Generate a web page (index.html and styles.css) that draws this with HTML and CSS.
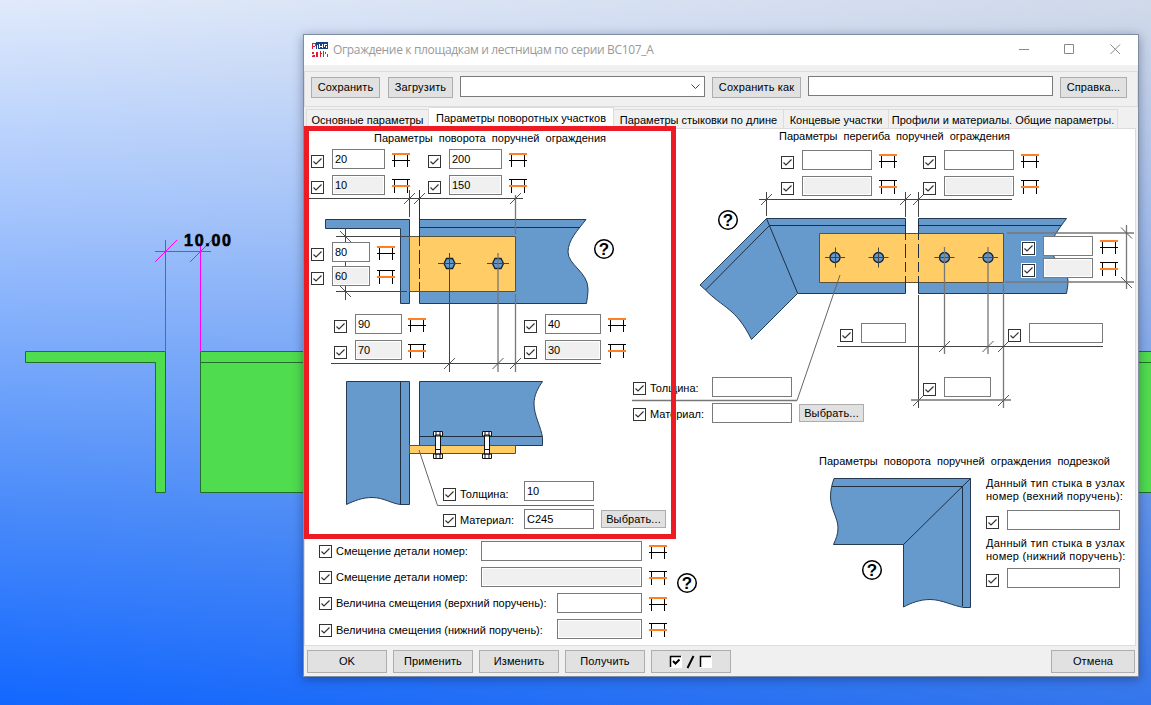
FILE: index.html
```html
<!DOCTYPE html>
<html lang="ru">
<head>
<meta charset="utf-8">
<title>Ограждение к площадкам и лестницам по серии ВС107_А</title>
<link rel="stylesheet" href="styles.css">
</head>
<body>
<svg class="defs" width="0" height="0">
  <symbol id="chk" viewBox="0 0 13 13"><rect x=".5" y=".5" width="12" height="12" fill="#fff" stroke="#333"/><path d="M2.5 6.5L5 9L10.5 3.5" fill="none" stroke="#333" stroke-width="1.2"/></symbol>
  <symbol id="top" viewBox="0 0 18 14"><path d="M2.5 2V14M15.5 2V14M0 7.5H18" stroke="#000" fill="none"/><path d="M0 0H18V2H0Z" fill="#ff7f27"/></symbol>
  <symbol id="mid" viewBox="0 0 18 14"><path d="M2.5 0V14M15.5 0V14M0 .5H18" stroke="#000" fill="none"/><path d="M0 6H18V8H0Z" fill="#ff7f27"/></symbol>
</svg>
<svg class="model" viewBox="0 0 1151 705">
  <g fill="#4fdc4f" stroke="#20702a">
    <path d="M25.5 351.5H165.5V492.5H155.5V362.5H25.5Z"/>
    <path d="M200.5 351.5H1160V492.5H200.5ZM200.5 362.5H1160"/>
  </g>
  <path d="M165.5 240V351M200.5 245V351M155 251.5H211M155 262L177 240M190 262L212 240" stroke="#f0f" fill="none" shape-rendering="crispEdges"/>
  <text class="dim" x="184" y="246" textLength="47">10.00</text>
</svg>

<main class="window">
  <header class="titlebar">
    <svg class="logo" viewBox="0 0 17 16"><path d="M4 0H16V7H4Z" fill="#173f8a"/><path d="M0 1H1V7H0ZM1 1H4V2H1ZM3 2H4V4H3ZM1 4H3V5H1ZM0 10H2V12H0ZM1 13H3V15H0V14ZM4 10H6V15H4ZM8 9H9V15H8ZM11 9H12V15H11ZM13 10H14V12H13ZM15 12H16V15H15ZM9 11H10V12H9Z" fill="#e11b32"/><path d="M5 3H6V7H5ZM7 2H8V6H7ZM8 4H10V5H8ZM10 2H11V6H10ZM12 2H15V3H13V5H12ZM14 4H15V6H14Z" fill="#fff"/></svg>
    <span class="caption">Ограждение к площадкам и лестницам по серии ВС107_А</span>
    <svg class="winbtns" viewBox="0 0 102 12"><path d="M0 5.500H10M45.500 .5H54.500V9.500H45.500ZM91.500 .5L101 10M101 .5L91.500 10" fill="none" stroke="#888"/></svg>
  </header>

  <section class="toolbar">
    <button class="btn b-save">Сохранить</button>
    <button class="btn b-load">Загрузить</button>
    <div class="combo"><svg viewBox="0 0 9 6"><path d="M.5 .5L4.500 4.500L8.500 .5" fill="none" stroke="#444"/></svg></div>
    <button class="btn b-saveas">Сохранить как</button>
    <input class="box name">
    <button class="btn b-help">Справка...</button>
  </section>

  <nav class="tabs">
    <span class="tab t1">Основные параметры</span><span class="tab t2 active">Параметры поворотных участков</span><span class="tab t3">Параметры стыковки по длине</span><span class="tab t4">Концевые участки</span><span class="tab t5">Профили и материалы. Общие параметры.</span>
  </nav>

  <section class="page">
    <svg class="drawing" viewBox="305 129 830 516">
      <g fill="#6699cc" stroke="#253b55">
        <path d="M325.500 219.500H409.500V303.500H400.500V228.500H325.500Z"/>
        <path d="M419.500 219.500H586C578 230 568 240 568 252C568 265 588 272 588 289C588 295 587 299 586.500 303.500H419.500Z"/>
        <path d="M346.500 381.500H409.500V504.500H401C392 504 384 497.500 372 497.500C362 497.500 354 501 346.500 504.500Z"/>
        <path d="M419.500 381.500H542.500C538 388 534 395 534 404C534 415 541 427 542.500 437.500V445.500H419.500Z"/>
        <path d="M766.500 218.500H905.500V293.500H797.500L751.500 339.500C736 308 723 308 705.500 290L700 285Z"/>
        <path d="M918.500 218.500H1066.500C1058 230 1050 240 1051 249C1053 262 1068 268 1068 281C1068 286 1067 290 1066.500 293.500H918.500Z"/>
        <path d="M834 478.500H970.500V607.500H964C953 606 942 599.500 930 599.500C920 599.500 911 603 903.500 607V544.500H833.500C836 539 838 534 838 528C838 518 830.500 509 830.500 497C830.500 490 832 484 834 478.500Z"/>
      </g>
      <path d="M419.500 227.500H580M400.500 381.500V504M419.500 436.500H542.500M766.500 218.500L797.500 293M905.500 225.500H769.500L705.500 290M918.500 225.500H1061M832 486.500H962.500V606M970.500 478.500L903.500 544.500" class="edge"/>
      <g fill="#ffcc66" stroke="#5c5138">
        <path d="M409.500 236.500H515.500V291.500H409.500ZM409.500 445.500H515.500V453.500H409.500ZM819.500 233.500H1003.500V282.500H819.500Z"/>
      </g>
      <path d="M419.500 190V246M419.500 250V264M419.500 268V279M419.500 282V291M905.500 220V240M905.500 244V258M905.500 262V272M905.500 276V293M918.500 220V240M918.500 244V258M918.500 262V272M918.500 276V293" class="edge"/>
      <g fill="#6699cc" stroke="#14202e" stroke-width="1.300">
        <path d="M444 263.500L446.500 258.500H452.500L455 263.500L452.500 268.500H446.500ZM492.500 263.500L495 258.500H501L503.500 263.500L501 268.500H495Z"/>
        <circle cx="835" cy="257.500" r="5"/><circle cx="878.500" cy="257.500" r="5"/><circle cx="944.500" cy="257.500" r="5"/><circle cx="988" cy="257.500" r="5"/>
      </g>
      <path class="dimline" d="M309 198.500H523M409.500 190V217M336 236.500H409M336 291.500H407M345.500 228V300M438 263.500H461M487 263.500H509M449.500 253V372M331 363.500H601
        M759 199.500H1012M766.500 192V216M905.500 192V217M918.500 192V217M825 257.500H845M868.500 257.500H888.500M934.500 257.500H954.500M978 257.500H998M835.500 247.500V267.500M878.500 247.500V267.500M837 346.500H1103M918.500 295V408"/>
      <path class="greyline" d="M515.500 195V234M515.500 294V372M498 253V372M1007 233H1134M1005 282H1134M1126.500 225V289M944.500 247V354M988 247V354M1003.500 284V408M911 400H1011M797 400.500H632"/>
      <path class="leader" d="M419 450L437.500 505.500H594M840 275L797 400.500"/>
      <path class="tick" d="M404 204L415 193M414 204L425 193M510 204L521 193M444 369L455 358M492.500 369L503.500 358M510 369L521 358M340 231L351 242M340 286L351 297
        M761 205L772 194M900 205L911 194M913 205L924 194M939 352L950 341M982.500 352L993.500 341M998 352L1009 341M913 406L924 395M998 406L1009 395M1121 227.500L1132 238.500M1121 277L1132 288"/>
      <g fill="#fff" stroke="#111">
        <path d="M435.500 435H440.500V454H435.500ZM433.500 431.500H442.500V436H433.500ZM433.500 454H442.500V458.500H433.500ZM436 431.500V436M440 431.500V436M436 454V458M440 454V458M435.500 449.500H440.500"/>
        <path d="M484.500 435H489.500V454H484.500ZM482.500 431.500H491.500V436H482.500ZM482.500 454H491.500V458.500H482.500ZM485 431.500V436M489 431.500V436M485 454V458M489 454V458M484.500 449.500H489.500"/>
      </g>
      <g class="help"><circle cx="604" cy="249" r="9.300"/><circle cx="687" cy="583" r="9.300"/><circle cx="728" cy="220" r="9.300"/><circle cx="872" cy="570" r="9.300"/>
        <text x="604" y="255">?</text><text x="687" y="589">?</text><text x="728" y="226">?</text><text x="872" y="576">?</text></g>
      <g class="heading"><text x="374" y="142" textLength="232">Параметры поворота поручней ограждения</text>
        <text x="779" y="140" textLength="231">Параметры перегиба поручней ограждения</text>
        <text x="819" y="465" textLength="291">Параметры поворота поручней ограждения подрезкой</text></g>
    </svg>

    <div class="group turn-a">
      <div class="field"><svg class="chk"><use href="#chk"/></svg><input class="box" value="20"><svg class="ico"><use href="#top"/></svg></div>
      <div class="field"><svg class="chk"><use href="#chk"/></svg><input class="box low" value="10"><svg class="ico"><use href="#mid"/></svg></div>
    </div>
    <div class="group turn-b">
      <div class="field"><svg class="chk"><use href="#chk"/></svg><input class="box" value="200"><svg class="ico"><use href="#top"/></svg></div>
      <div class="field"><svg class="chk"><use href="#chk"/></svg><input class="box low" value="150"><svg class="ico"><use href="#mid"/></svg></div>
    </div>
    <div class="group turn-c">
      <div class="field"><svg class="chk"><use href="#chk"/></svg><input class="box" value="80"><svg class="ico"><use href="#top"/></svg></div>
      <div class="field"><svg class="chk"><use href="#chk"/></svg><input class="box low" value="60"><svg class="ico"><use href="#mid"/></svg></div>
    </div>
    <div class="group turn-d">
      <div class="field"><svg class="chk"><use href="#chk"/></svg><input class="box" value="90"><svg class="ico"><use href="#top"/></svg></div>
      <div class="field"><svg class="chk"><use href="#chk"/></svg><input class="box low" value="70"><svg class="ico"><use href="#mid"/></svg></div>
    </div>
    <div class="group turn-e">
      <div class="field"><svg class="chk"><use href="#chk"/></svg><input class="box" value="40"><svg class="ico"><use href="#top"/></svg></div>
      <div class="field"><svg class="chk"><use href="#chk"/></svg><input class="box low" value="30"><svg class="ico"><use href="#mid"/></svg></div>
    </div>
    <div class="group plate-a">
      <div class="field"><svg class="chk"><use href="#chk"/></svg><label>Толщина:</label><input class="box" value="10"></div>
      <div class="field"><svg class="chk"><use href="#chk"/></svg><label>Материал:</label><input class="box" value="C245"><button class="btn pick">Выбрать...</button></div>
    </div>

    <div class="group bend-a">
      <div class="field"><svg class="chk"><use href="#chk"/></svg><input class="box"><svg class="ico"><use href="#top"/></svg></div>
      <div class="field"><svg class="chk"><use href="#chk"/></svg><input class="box low"><svg class="ico"><use href="#mid"/></svg></div>
    </div>
    <div class="group bend-b">
      <div class="field"><svg class="chk"><use href="#chk"/></svg><input class="box"><svg class="ico"><use href="#top"/></svg></div>
      <div class="field"><svg class="chk"><use href="#chk"/></svg><input class="box low"><svg class="ico"><use href="#mid"/></svg></div>
    </div>
    <div class="group bend-c">
      <div class="field"><svg class="chk"><use href="#chk"/></svg><input class="box"><svg class="ico"><use href="#top"/></svg></div>
      <div class="field"><svg class="chk"><use href="#chk"/></svg><input class="box low"><svg class="ico"><use href="#mid"/></svg></div>
    </div>
    <div class="group bend-d"><div class="field"><svg class="chk"><use href="#chk"/></svg><input class="box"></div></div>
    <div class="group bend-e"><div class="field"><svg class="chk"><use href="#chk"/></svg><input class="box"></div></div>
    <div class="group bend-f"><div class="field"><svg class="chk"><use href="#chk"/></svg><input class="box"></div></div>
    <div class="group plate-b">
      <div class="field"><svg class="chk"><use href="#chk"/></svg><label>Толщина:</label><input class="box"></div>
      <div class="field"><svg class="chk"><use href="#chk"/></svg><label>Материал:</label><input class="box"><button class="btn pick">Выбрать...</button></div>
    </div>

    <div class="group offsets">
      <div class="field"><svg class="chk"><use href="#chk"/></svg><label>Смещение детали номер:</label><input class="box wide"><svg class="ico"><use href="#top"/></svg></div>
      <div class="field"><svg class="chk"><use href="#chk"/></svg><label>Смещение детали номер:</label><input class="box wide low"><svg class="ico"><use href="#mid"/></svg></div>
      <div class="field"><svg class="chk"><use href="#chk"/></svg><label>Величина смещения (верхний поручень):</label><input class="box"><svg class="ico"><use href="#top"/></svg></div>
      <div class="field last"><svg class="chk"><use href="#chk"/></svg><label>Величина смещения (нижний поручень):</label><input class="box low"><svg class="ico"><use href="#mid"/></svg></div>
    </div>

    <div class="group nodes">
      <p>Данный тип стыка в узлах<br>номер (вехний поручень):</p>
      <div class="field"><svg class="chk"><use href="#chk"/></svg><input class="box"></div>
      <p class="second">Данный тип стыка в узлах<br>номер (нижний поручень):</p>
      <div class="field"><svg class="chk"><use href="#chk"/></svg><input class="box"></div>
    </div>
  </section>

  <footer class="actions">
    <button class="btn">OK</button><button class="btn">Применить</button><button class="btn">Изменить</button><button class="btn">Получить</button>
    <button class="btn toggle"><svg viewBox="0 0 44 14"><path d="M1 1H13V13H1ZM31 1H43V13H31Z" fill="#fff"/><path d="M1.500 12V1.500H12M31.500 12V1.500H42" fill="none" stroke="#000" stroke-width="1.500"/><path d="M1 12.500H12.500V1M31 12.500H42.500V1" fill="none" stroke="#fff"/><path d="M4 6L6.500 8.500L10.500 4.500" fill="none" stroke="#000" stroke-width="2"/><path d="M18.500 13L24.500 1" stroke="#000" stroke-width="2"/></svg></button>
    <button class="btn cancel">Отмена</button>
  </footer>
</main>
<div class="highlight"></div>
</body>
</html>
```
FILE: styles.css
```css
* { box-sizing: border-box; }
body {
  margin: 0; width: 1151px; height: 705px; overflow: hidden; position: relative;
  font: 11px/13px "Liberation Sans", Arial, sans-serif; color: #000;
  background:
    linear-gradient(to right, rgba(160,165,175,0), rgba(160,165,175,.24)),
    linear-gradient(to bottom, #e0eafb 0%, #a6c6fd 29%, #4a8bfa 72%, #1267ff 100%);
}
svg { display: block; flex: none; }
.defs { position: absolute; }
.model { position: absolute; inset: 0; width: 1151px; height: 705px; }
.dim { font-weight: bold; font-size: 16px; stroke: #000; stroke-width: .6; }

.window {
  position: absolute; left: 303px; top: 34px; width: 836px; height: 643px;
  border: 1px solid #7f8da3; background: #f0f0f0;
  display: flex; flex-direction: column;
  box-shadow: 0 2px 10px rgba(0,0,30,.35);
}
.titlebar { height: 30px; background: #fff; display: flex; align-items: center; padding: 0 17px 0 8px; }
.logo { width: 17px; height: 16px; }
.caption { margin-left: 4px; font: 12px/16px "Open Sans", "Noto Sans", sans-serif; color: #999; white-space: nowrap; letter-spacing: -.34px; }
.winbtns { width: 102px; height: 12px; margin-left: auto; }

.toolbar { height: 36px; margin-top: 6px; border: 1px solid #dcdcdc; display: flex; padding: 5px 0 0 6px; }
.btn {
  flex: none; height: 21px; padding: 0; border: 1px solid #adadad; background: #e1e1e1; color: #000;
  font: inherit; letter-spacing: .12px; text-align: center; white-space: nowrap;
}
.box {
  flex: none; height: 20px; border: 1px solid #7a7a7a; border-radius: 0; background: #fff; padding: 0 2px 1px;
  font: inherit; outline: 0;
}
.low { background: #f0f0f0; box-shadow: inset 0 0 0 1px #fff; }
.b-save { width: 69px; }
.b-load { width: 65px; margin-left: 8px; }
.combo { width: 245px; height: 21px; margin-left: 7px; margin-top: -1px; border: 1px solid #7a7a7a; background: #fff; display: flex; align-items: center; justify-content: flex-end; padding-right: 4px; }
.combo svg { width: 9px; height: 6px; }
.b-saveas { width: 89px; margin-left: 7px; }
.name { width: 245px; margin: -1px 7px 0; }
.b-help { width: 67px; }

.tabs { height: 22px; display: flex; align-items: flex-end; padding-left: 2px; margin-top: -1px; }
.tab { height: 19px; border: 1px solid #dcdcdc; border-bottom: 0; border-left-width: 0; padding-top: 4px; text-align: center; white-space: nowrap; }
.tab.active { height: 21px; background: #fff; }
.t1 { width: 123px; border-left-width: 1px; }
.t2 { width: 185px; }
.t3 { width: 170px; }
.t4 { width: 105px; }
.t5 { width: 229px; }

.page { position: relative; width: 832px; height: 518px; border: 1px solid #dcdcdc; background: #fff; }
.drawing { width: 830px; height: 516px; }
.edge, .dimline, .greyline, .tick, .leader { fill: none; stroke: #1f2f42; }
.dimline { stroke: #444; }
.greyline { stroke: #777; stroke-width: 1.3; }
.leader { stroke: #666; }
.tick { stroke: #555; }
.help circle { fill: #fff; stroke: #000; stroke-width: 1.5; }
.help text { font: bold 17px "Liberation Sans", sans-serif; text-anchor: middle; }
.heading { font-size: 11px; word-spacing: 3px; }

.group { position: absolute; display: flex; flex-direction: column; gap: 6px; }
.field { display: flex; height: 20px; align-items: flex-start; }
.chk { width: 13px; height: 13px; margin: 6px 8px 0 0; }
.ico { width: 18px; height: 14px; margin: 4px 0 0 7px; }
.group label { white-space: nowrap; margin-top: 6px; }

.turn-a { left: 6px; top: 20px; }
.turn-b { left: 123px; top: 20px; }
.turn-a .box, .turn-b .box { width: 53px; }
.turn-c { left: 6px; top: 113px; gap: 4px; }
.turn-c .box { width: 38px; }
.turn-d { left: 29px; top: 185px; }
.turn-d .box { width: 47px; }
.turn-d .ico { margin-left: 6px; }
.turn-e { left: 219px; top: 185px; }
.turn-e .box { width: 56px; }

.plate-a .chk, .plate-b .chk, .offsets .chk { margin-right: 4px; }
.pick { width: 65px; height: 18px; margin: 1px 0 0 7px; line-height: 14px; }
.plate-a { left: 138px; top: 352px; gap: 8px; }
.plate-a label { width: 64px; }
.plate-a .box { width: 70px; }
.plate-a .field:first-child .chk { margin-top: 7px; }
.plate-a .field:first-child label { margin-top: 7px; }
.plate-a .field:last-child .chk, .plate-a .field:last-child label { margin-top: 5px; }

.bend-a { left: 476px; top: 21px; }
.bend-b { left: 618px; top: 21px; }
.bend-a .box, .bend-b .box { width: 70px; }
.bend-c { left: 717px; top: 107px; gap: 2px; }
.bend-c .box { width: 50px; }
.bend-c .chk { background: #fff; outline: 1px solid #fff; }
.bend-d { left: 535px; top: 194px; }
.bend-d .box { width: 45px; }
.bend-e { left: 703px; top: 194px; }
.bend-e .box { width: 74px; }
.bend-f { left: 618px; top: 248px; }
.bend-f .box { width: 47px; }
.plate-b { left: 328px; top: 248px; }
.plate-b .chk, .plate-b label { margin-top: 5px; }
.plate-b label { width: 62px; }
.plate-b .box { width: 80px; }

.offsets { left: 14px; top: 412px; width: 348px; }
.offsets .chk, .offsets label { margin-top: 4px; }
.offsets .last .chk, .offsets .last label { margin-top: 5px; }
.offsets .box { width: 85px; margin-left: auto; }
.offsets .wide { width: 161px; }

.nodes { left: 681px; top: 348px; gap: 0; }
.nodes p { margin: 0 0 7px; letter-spacing: .25px; white-space: nowrap; }
.nodes .second { margin: 7px 0 5px; }
.nodes .box { width: 113px; }

.actions { display: flex; padding: 4px 3px 0; gap: 6px; }
.actions .btn { width: 80px; height: 23px; }
.actions .toggle { display: flex; align-items: center; justify-content: center; }
.toggle svg { width: 44px; height: 14px; }
.actions .cancel { width: 84px; margin-left: auto; }

.highlight { position: absolute; left: 304px; top: 126px; width: 372px; height: 413px; border: 5px solid #ed1c24; }
```
